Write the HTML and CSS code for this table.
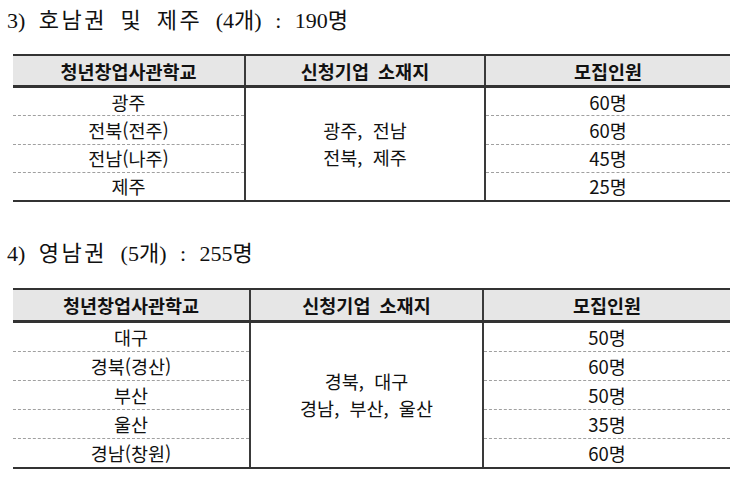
FILE: index.html
```html
<!DOCTYPE html>
<html lang="ko">
<head>
<meta charset="utf-8">
<link rel="stylesheet" href="styles.css">
</head>
<body>
<div class="page">
  <h2 class="title t1">3) <span class="ko">호남권</span> <span class="ko">및</span> <span class="ko">제주</span> (4개) : 190명</h2>
  <table class="tbl tbl1">
    <colgroup><col class="c1a"><col class="c2a"><col class="c3a"></colgroup>
    <thead>
      <tr><th>청년창업사관학교</th><th>신청기업 소재지</th><th>모집인원</th></tr>
    </thead>
    <tbody>
      <tr><td class="dash">광주</td><td class="mid" rowspan="4">광주, 전남<br>전북, 제주</td><td class="dash">60명</td></tr>
      <tr><td class="dash">전북(전주)</td><td class="dash">60명</td></tr>
      <tr><td class="dash">전남(나주)</td><td class="dash">45명</td></tr>
      <tr><td>제주</td><td>25명</td></tr>
    </tbody>
  </table>

  <h2 class="title t2">4) <span class="ko">영남권</span> (5개) : 255명</h2>
  <table class="tbl tbl2">
    <colgroup><col class="c1b"><col class="c2b"><col class="c3b"></colgroup>
    <thead>
      <tr><th>청년창업사관학교</th><th>신청기업 소재지</th><th>모집인원</th></tr>
    </thead>
    <tbody>
      <tr><td class="dash">대구</td><td class="mid" rowspan="5">경북, 대구<br>경남, 부산, 울산</td><td class="dash">50명</td></tr>
      <tr><td class="dash">경북(경산)</td><td class="dash">60명</td></tr>
      <tr><td class="dash">부산</td><td class="dash">50명</td></tr>
      <tr><td class="dash">울산</td><td class="dash">35명</td></tr>
      <tr><td>경남(창원)</td><td>60명</td></tr>
    </tbody>
  </table>
</div>
</body>
</html>
```
FILE: styles.css
```css
html, body {
  margin: 0;
  padding: 0;
  background: #ffffff;
}
.page {
  padding: 0 7px 0 13px;
  width: 737px;
  box-sizing: border-box;
}
.title {
  margin: 0 0 0 -6px;
  font-family: "Liberation Serif", "Noto Sans CJK KR", serif;
  font-weight: normal;
  font-size: 22px;
  word-spacing: 8px;
  color: #111;
  line-height: 24px;
  box-sizing: border-box;
}
.title .ko {
  letter-spacing: 2.5px;
}
.t1 {
  padding-top: 9px;
  height: 54px;
}
.t2 {
  padding-top: 40px;
  height: 86px;
}
.tbl {
  border-collapse: collapse;
  table-layout: fixed;
  width: 717px;
  font-family: "Noto Sans CJK KR", "Noto Sans", sans-serif;
  font-size: 18.5px;
  color: #111;
}
.c1a { width: 232px; }
.c2a { width: 240px; }
.c3a { width: 245px; }
.c1b { width: 237px; }
.c2b { width: 233px; }
.c3b { width: 247px; }
.tbl thead tr {
  background: #e6e6e6;
}
.tbl th {
  font-weight: bold;
  text-align: center;
  border-top: 2px solid #333;
  border-bottom: 3px solid #333;
  padding: 0;
  line-height: 20px;
  word-spacing: 4px;
}
.tbl1 th { height: 29px; }
.tbl2 th { height: 30px; }
.tbl th + th {
  border-left: 2px solid #3a3a3a;
}
.tbl td {
  text-align: center;
  padding: 0;
  line-height: 20px;
  vertical-align: middle;
}
.tbl1 td { height: 27.25px; }
.tbl2 td { height: 28px; }
.tbl td.dash {
  border-bottom: 1px dashed #a0a0a0;
}
.tbl tbody tr:last-child td,
.tbl td.mid {
  border-bottom: 2px solid #333;
}
.tbl td.mid {
  line-height: 27px;
  word-spacing: 5px;
}
.tbl td.mid,
.tbl td.mid + td,
.tbl tbody tr td:nth-child(2):not(.mid) {
  border-left: 2px solid #3a3a3a;
}
```
